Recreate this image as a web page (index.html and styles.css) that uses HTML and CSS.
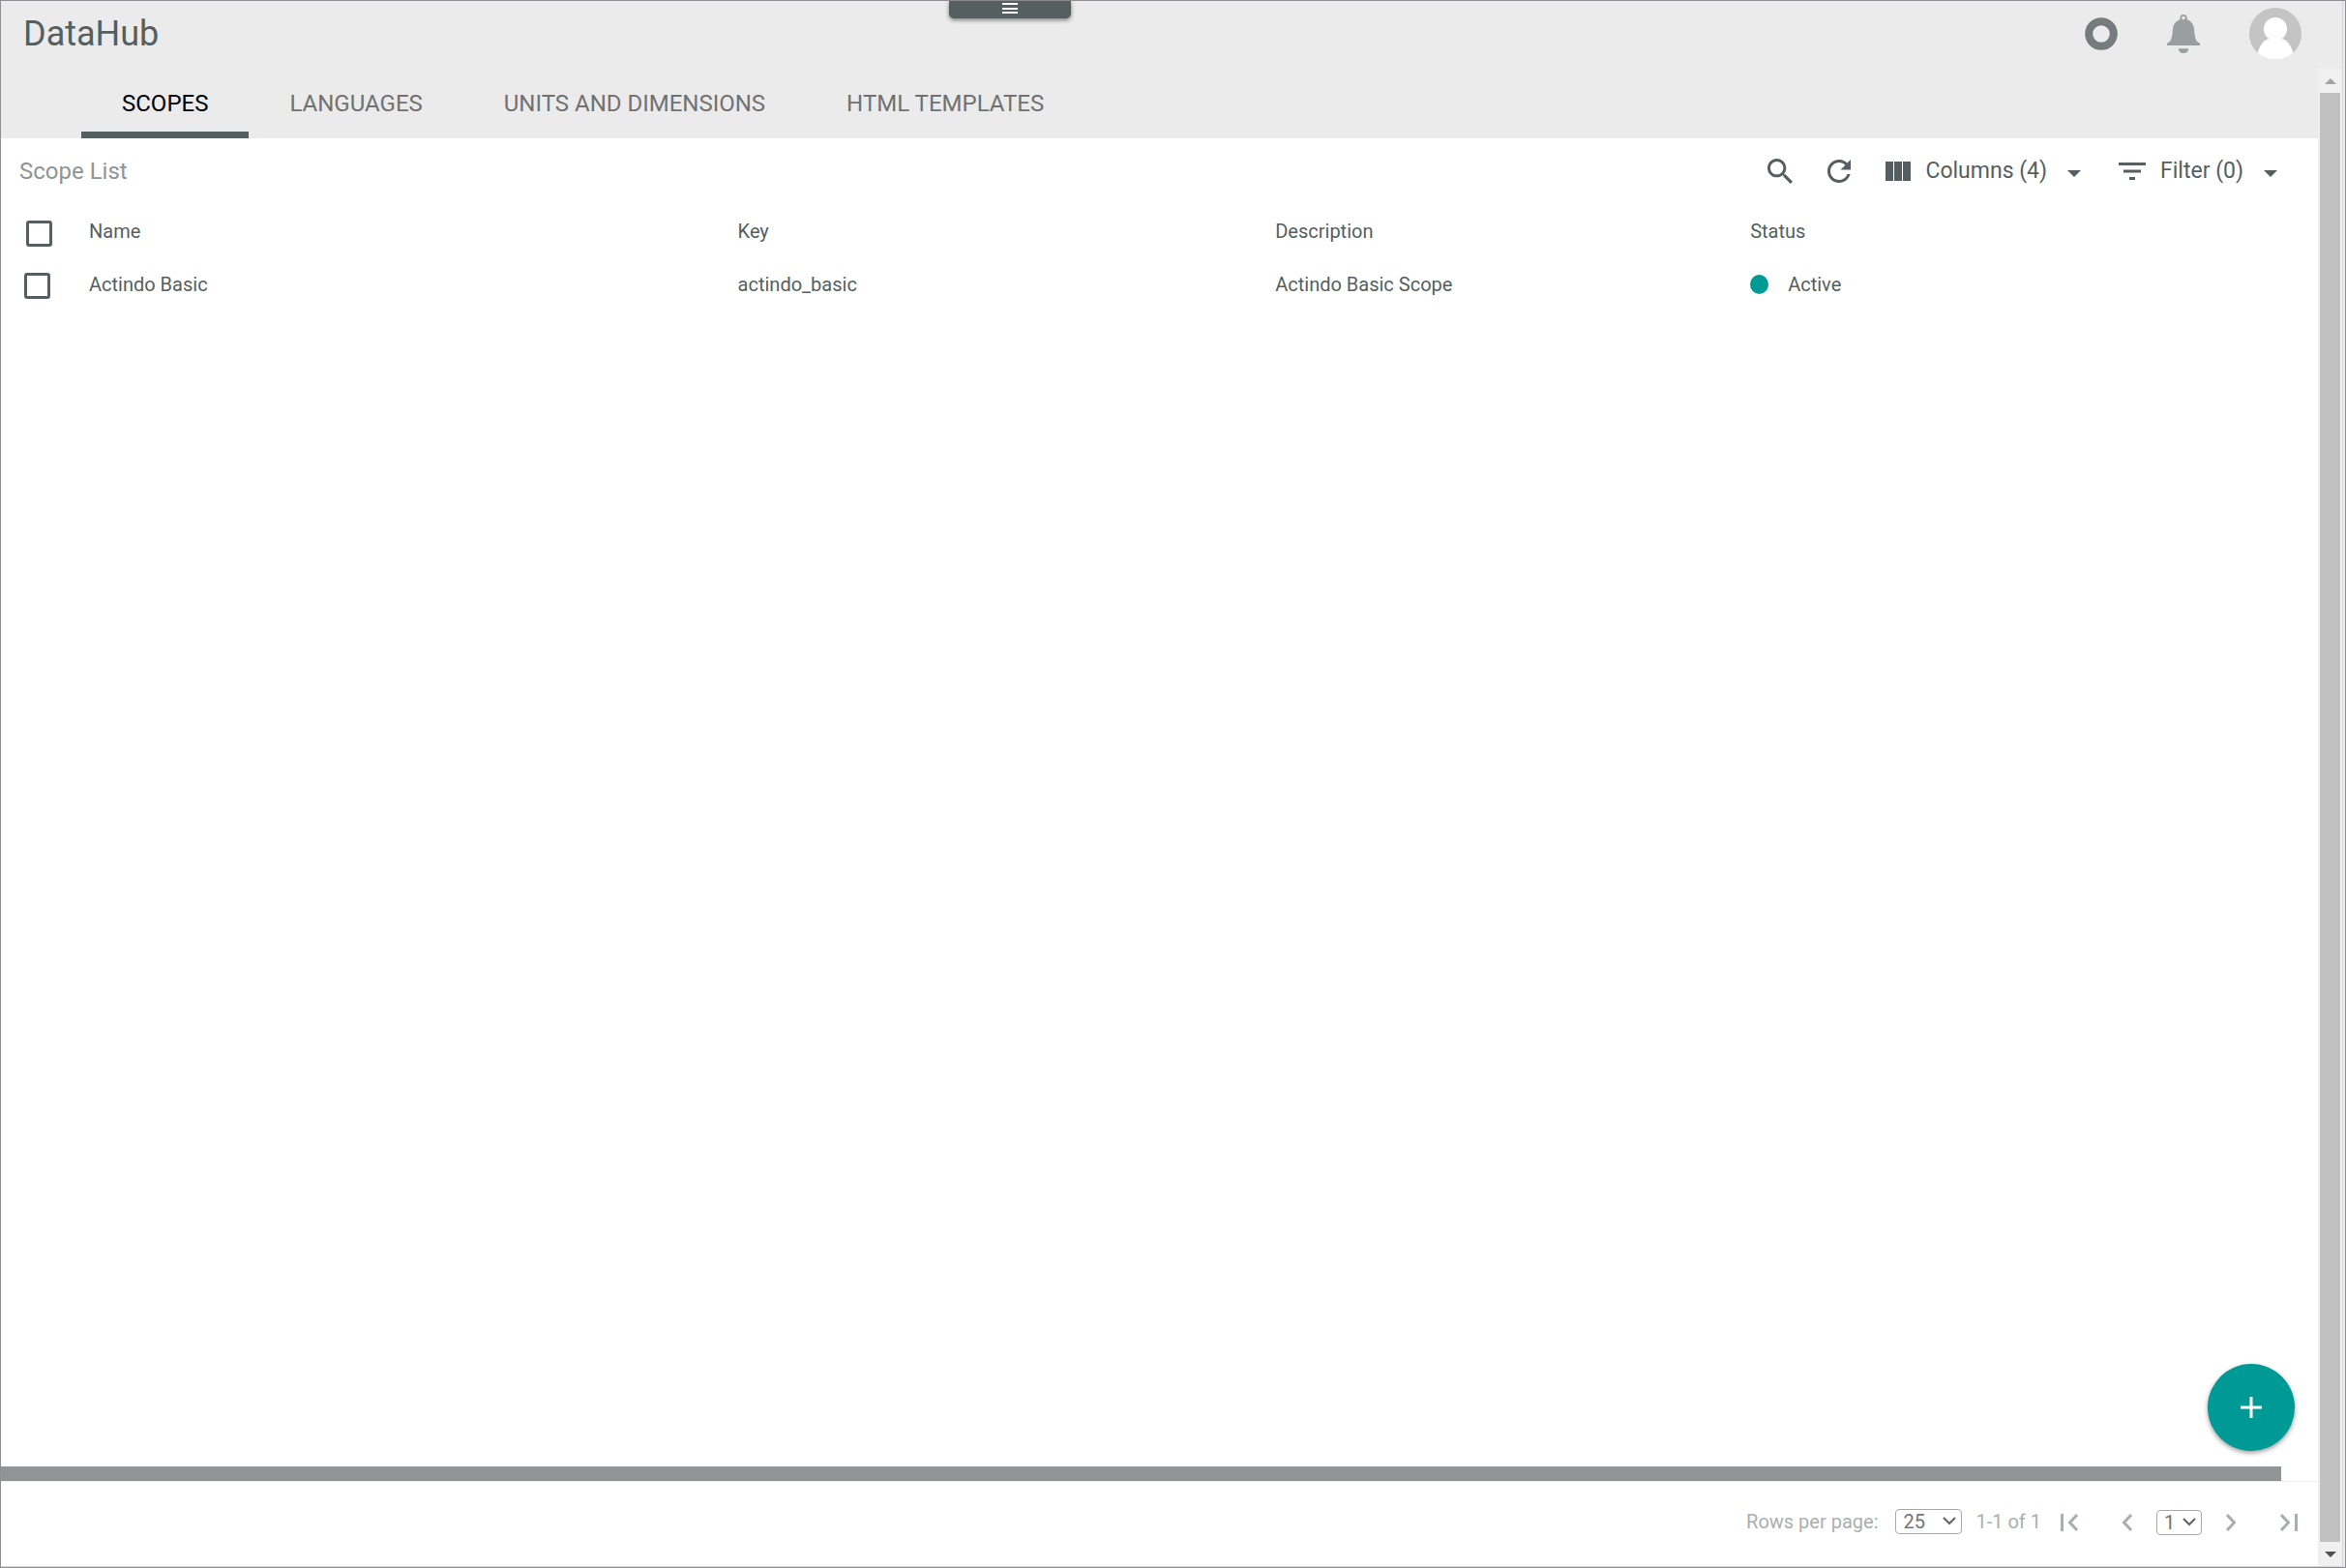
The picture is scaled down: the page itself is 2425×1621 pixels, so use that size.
FILE: index.html
```
<!DOCTYPE html>
<html lang="en">
<head>
<meta charset="utf-8">
<title>DataHub</title>
<link rel="stylesheet" href="styles.css">
</head>
<body>
<div class="window">
  <div class="app">
    <header class="topbar">
      <h1 class="title">DataHub</h1>
      <button class="menu-pull" aria-label="Open menu">
        <svg width="16" height="12" viewBox="0 0 16 12" shape-rendering="crispEdges"><path d="M0 0h16v2H0zM0 5h16v2H0zM0 9h16v2H0z" fill="#fff"/></svg>
      </button>
      <div class="actions">
        <button class="icon-btn" aria-label="Activity">
          <svg width="34" height="34" viewBox="0 0 34 34"><circle cx="17" cy="17" r="12.8" fill="none" stroke="#747c7d" stroke-width="8"/></svg>
        </button>
        <button class="icon-btn" aria-label="Notifications">
          <svg width="34" height="40" viewBox="0 0 34 40" fill="#999e9e"><path fill-rule="evenodd" d="M17 0a3.6 3.6 0 0 1 3.6 3.6v1.6c4.800 1.600 7 5.500 7.400 9.800C28.500 21 29 25 31 28c.8 1 3 1 3 2.500V32H0v-1.500C0 29 2.200 29 3 28c2-3 2.500-7 3-13 .4-4.300 2.600-8.200 7.400-9.800V3.600A3.600 3.600 0 0 1 17 0zm0 1.800a1.800 1.800 0 1 0 0 3.600 1.800 1.800 0 0 0 0-3.600zM12 35.200h10.200c0 3-2 4.800-5.100 4.800S12 38.200 12 35.200z"/></svg>
        </button>
        <button class="icon-btn" aria-label="Account">
          <svg width="54" height="54" viewBox="0 0 54 54"><circle cx="27" cy="27" r="27" fill="#c4c4c4"/><circle cx="27" cy="22" r="12" fill="#fff"/><path d="M8.500 46.500C11 38 16 32 22 32h10c6 0 11 6 13.500 14.500A27 27 0 0 1 8.500 46.500z" fill="#fff"/></svg>
        </button>
      </div>
    </header>
    <div class="body">
      <main class="main">
        <nav class="tabs">
          <a class="tab tab-active" href="#scopes" aria-current="page">SCOPES</a>
          <a class="tab" href="#languages">LANGUAGES</a>
          <a class="tab" href="#units">UNITS AND DIMENSIONS</a>
          <a class="tab" href="#templates">HTML TEMPLATES</a>
        </nav>
        <div class="toolbar">
          <h2 class="list-title">Scope List</h2>
          <div class="tools">
            <button class="icon-btn" aria-label="Search">
              <svg width="26" height="26" viewBox="3 3 17.500 17.500" fill="#555f61"><path d="M15.500 14h-.79l-.28-.27C15.410 12.590 16 11.110 16 9.500 16 5.910 13.090 3 9.500 3S3 5.910 3 9.500 5.910 16 9.500 16c1.610 0 3.090-.59 4.230-1.570l.27.28v.79l5 4.990L20.490 19l-4.990-5zm-6 0C7.010 14 5 11.990 5 9.500S7.010 5 9.500 5 14 7.010 14 9.500 11.990 14 9.500 14z"/></svg>
            </button>
            <button class="icon-btn" aria-label="Refresh">
              <svg width="24" height="24" viewBox="4 4 16 16" fill="#555f61"><path d="M17.650 6.350C16.200 4.900 14.210 4 12 4c-4.420 0-7.990 3.580-7.990 8s3.570 8 7.990 8c3.730 0 6.840-2.550 7.730-6h-2.080c-.82 2.330-3.040 4-5.650 4-3.310 0-6-2.690-6-6s2.690-6 6-6c1.660 0 3.140.69 4.220 1.780L13 11h7V4l-2.350 2.350z"/></svg>
            </button>
            <button class="menu-btn">
              <svg width="26" height="20" viewBox="0 0 26 20" fill="#555f61"><path d="M0 0h8v20H0zM9 0h8v20H9zM18 0h8v20h-8z"/></svg>
              <span class="menu-label">Columns (4)</span>
              <svg class="caret" width="14" height="7" viewBox="0 0 14 7" fill="#555f61"><path d="M0 0h14L7 7z"/></svg>
            </button>
            <button class="menu-btn">
              <svg width="28" height="18" viewBox="0 0 28 18" fill="#555f61"><path d="M0 0h28v3H0zM5 7.500h18v3H5zM11 15h6v3h-6z"/></svg>
              <span class="menu-label">Filter (0)</span>
              <svg class="caret" width="14" height="7" viewBox="0 0 14 7" fill="#555f61"><path d="M0 0h14L7 7z"/></svg>
            </button>
          </div>
        </div>
        <table class="grid">
          <colgroup><col class="c-check"><col class="c-name"><col class="c-key"><col class="c-desc"><col></colgroup>
          <thead>
            <tr><th class="check check-all"><input type="checkbox" aria-label="Select all"></th><th>Name</th><th>Key</th><th>Description</th><th>Status</th></tr>
          </thead>
          <tbody>
            <tr><td class="check"><input type="checkbox" aria-label="Select Actindo Basic"></td><td>Actindo Basic</td><td>actindo_basic</td><td>Actindo Basic Scope</td><td><span class="status"><span class="dot"></span>Active</span></td></tr>
          </tbody>
        </table>
        <div class="space">
          <button class="fab" aria-label="Add scope"><svg width="22" height="22" viewBox="0 0 22 22" fill="#fff"><path d="M9.500 0h3v9.500H22v3h-9.500V22h-3v-9.500H0v-3h9.500z"/></svg></button>
        </div>
        <div class="hscroll"></div>
        <footer class="pager">
          <label for="rows">Rows per page:</label>
          <span class="select select-rows">
            <select id="rows"><option>25</option></select>
            <svg width="14" height="9" viewBox="0 0 14 9"><path d="M1 1l6 6 6-6" fill="none" stroke="#666" stroke-width="2.200"/></svg>
          </span>
          <span class="range">1-1 of 1</span>
          <span class="pages">
            <button class="icon-btn" aria-label="First page"><svg width="18" height="18" viewBox="0 0 18 18"><path d="M1.500 0v18M17 1L9.500 9l7.500 8" fill="none" stroke="#a9afae" stroke-width="3"/></svg></button>
            <button class="icon-btn prev" aria-label="Previous page"><svg width="11" height="18" viewBox="0 0 11 18"><path d="M10 1L2.500 9l7.500 8" fill="none" stroke="#a9afae" stroke-width="3"/></svg></button>
            <span class="select select-page">
              <select aria-label="Page"><option>1</option></select>
              <svg width="14" height="9" viewBox="0 0 14 9"><path d="M1 1l6 6 6-6" fill="none" stroke="#666" stroke-width="2.200"/></svg>
            </span>
            <button class="icon-btn" aria-label="Next page"><svg width="11" height="18" viewBox="0 0 11 18"><path d="M1 1l7.500 8L1 17" fill="none" stroke="#a9afae" stroke-width="3"/></svg></button>
            <button class="icon-btn last" aria-label="Last page"><svg width="18" height="18" viewBox="0 0 18 18"><path d="M1 1l7.500 8L1 17M16.500 0v18" fill="none" stroke="#a9afae" stroke-width="3"/></svg></button>
          </span>
        </footer>
      </main>
      <div class="vscroll">
        <span class="arrow"><svg width="12" height="6" viewBox="0 0 12 6" fill="#a3a3a3"><path d="M0 6h12L6 0z"/></svg></span>
        <span class="thumb"></span>
        <span class="arrow"><svg width="12" height="6" viewBox="0 0 12 6" fill="#505050"><path d="M0 0h12L6 6z"/></svg></span>
      </div>
    </div>
  </div>
</div>
</body>
</html>
```
FILE: styles.css
```
* { box-sizing: border-box; }

body {
  margin: 0;
  font-family: Roboto, "Liberation Sans", sans-serif;
  font-size: 20px;
  color: #555f61;
  background: #fff;
}

button, select { font: inherit; color: inherit; }
svg { display: block; flex: none; }

.window {
  display: flex;
  min-height: 100vh;
  padding-right: 2px;
  border: 1px solid #8f8f91;
  background: #ebebee;
}

.app {
  flex: 1;
  display: flex;
  flex-direction: column;
  border-right: 1px solid #d5d5de;
  border-bottom: 1px solid #d5d5d8;
  background: #fff;
}

/* Top bar */
.topbar {
  position: relative;
  display: flex;
  align-items: center;
  justify-content: space-between;
  height: 70px;
  padding: 0 42px 2px 23px;
  background: #ebebeb;
}

.title {
  margin: 0;
  font-size: 36px;
  line-height: 42px;
  font-weight: 400;
}

.menu-pull {
  position: absolute;
  top: 0;
  left: 980px;
  display: flex;
  justify-content: center;
  width: 126px;
  height: 18px;
  padding: 2px 0 0;
  border: 0;
  border-radius: 0 0 5px 5px;
  background: #555f61;
  box-shadow: 0 2px 4px rgba(0, 0, 0, 0.45);
}

.actions { display: flex; align-items: center; gap: 51px; }

.icon-btn {
  display: block;
  padding: 0;
  border: 0;
  background: none;
}

.body { flex: 1; display: flex; }

.main { flex: 1; display: flex; flex-direction: column; }

/* Tabs */
.tabs {
  display: flex;
  height: 72px;
  padding-left: 83px;
  background: #ebebeb;
}

.tab {
  padding: 0 42px;
  font-size: 24px;
  line-height: 72px;
  color: #717171;
  text-decoration: none;
}

.tab-active { color: #000; box-shadow: inset 0 -7px #555f61; }

/* Toolbar */
.toolbar {
  display: flex;
  align-items: center;
  justify-content: space-between;
  height: 68px;
  padding: 0 42px 0 19px;
}

.list-title {
  margin: 0;
  font-size: 24px;
  font-weight: 400;
  color: #8e9595;
}

.tools { display: flex; align-items: center; gap: 36px; }

.menu-btn {
  display: flex;
  align-items: center;
  gap: 15px;
  padding: 0;
  border: 0;
  background: none;
  font-size: 23px;
  line-height: 28px;
}

.menu-btn + .menu-btn { margin-left: 3px; }

.caret { margin: 4px 0 0 6px; }

/* Table */
.grid {
  width: 100%;
  table-layout: fixed;
  border-collapse: collapse;
  text-align: left;
}

.c-check { width: 91px; }
.c-name { width: 28%; }
.c-key { width: 23.2%; }
.c-desc { width: 20.5%; }

.grid th, .grid td {
  height: 54px;
  padding: 0;
  font-weight: 400;
  vertical-align: middle;
}

.grid th { height: 56px; }
.grid .check { padding: 2px 0 0 24px; }
.grid .check-all { padding: 4px 0 0 26px; }

.check input {
  appearance: none;
  display: block;
  width: 27px;
  height: 27px;
  margin: 0;
  border: 3px solid #555f61;
  border-radius: 3px;
}

.status { display: flex; align-items: center; gap: 20px; }

.dot {
  width: 19px;
  height: 20px;
  border-radius: 50%;
  background: #009a96;
}

.space {
  flex: 1;
  display: flex;
  align-items: flex-end;
  justify-content: flex-end;
  padding: 0 24px 16px;
}

.fab {
  display: grid;
  place-items: center;
  width: 90px;
  height: 90px;
  padding: 0;
  border: 0;
  border-radius: 50%;
  background: #009a96;
  box-shadow: 0 2px 5px rgba(0, 0, 0, 0.4);
}

.hscroll {
  height: 15px;
  margin-right: 38px;
  background: #919496;
}

/* Pager */
.pager {
  display: flex;
  align-items: center;
  justify-content: flex-end;
  height: 88px;
  padding: 0 21px 6px 0;
  border-top: 1px solid #ebebeb;
  color: #a9afae;
}

.select {
  display: grid;
  align-items: center;
  color: #757575;
}

.select select, .select svg { grid-area: 1 / 1; }
.select svg { justify-self: end; margin-right: 6px; pointer-events: none; }

.select select {
  appearance: none;
  width: 100%;
  height: 26px;
  padding: 0 0 0 7px;
  border: 1px solid #a9a9a9;
  border-radius: 4px;
  background: #fff;
  line-height: 24px;
}

.select-rows { width: 69px; margin: 0 14px 0 18px; }
.select-page { width: 47px; }
.range { margin-right: 20px; }
.pages { display: flex; align-items: center; gap: 25px; padding-top: 2px; }
.prev { margin-left: 20px; }
.last { margin-left: 20px; }

/* Window scrollbar */
.vscroll {
  display: flex;
  flex-direction: column;
  width: 25px;
  padding: 0 2px;
  background: #f0f0f0;
}

.arrow {
  display: grid;
  place-items: center;
  height: 25px;
}

.thumb { flex: 1; background: #c1c1c1; }
```
